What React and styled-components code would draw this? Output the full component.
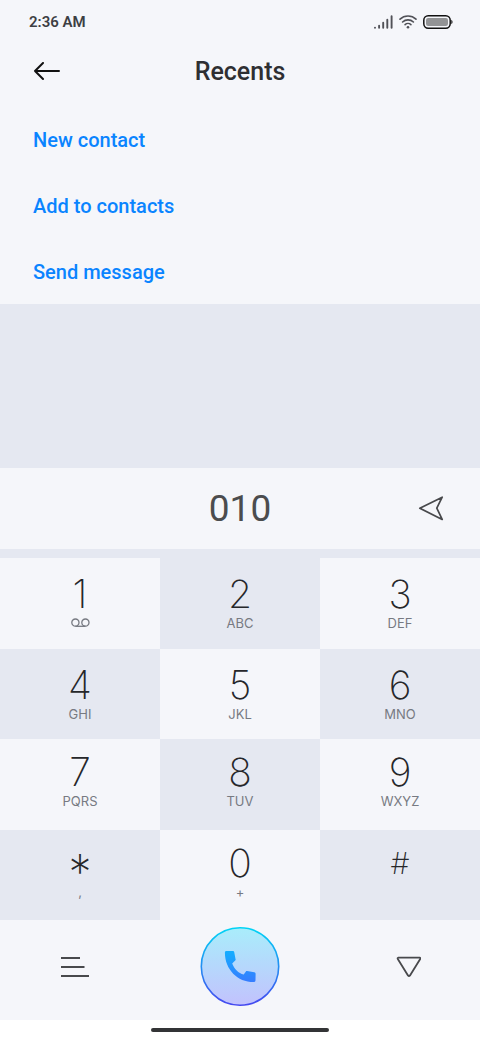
import React from "react";
import styled, { createGlobalStyle } from "styled-components";

const GlobalStyle = createGlobalStyle`
  *, *::before, *::after { box-sizing: border-box; }
  body {
    margin: 0;
    background: #fff;
    font-family: Roboto, "Liberation Sans", sans-serif;
    color: #303236;
  }
  button { font: inherit; color: inherit; border: 0; padding: 0; background: none; cursor: pointer; }
  svg { display: block; }
`;

const Screen = styled.div`
  min-height: 100vh;
  display: flex;
  flex-direction: column;
  background: #e5e8f1;
`;

const TopPanel = styled.div`
  background: #f5f6fa;
`;

const StatusBar = styled.div`
  height: 44px;
  padding: 0 27px 0 29px;
  display: flex;
  align-items: center;
  justify-content: space-between;
`;

const Clock = styled.span`
  font-size: 15px;
  font-weight: 600;
  line-height: 20px;
  color: #3d3e43;
`;

const StatusIcons = styled.div`
  display: flex;
  align-items: center;
  gap: 6px;
`;

const Header = styled.header`
  height: 56px;
  padding: 0 32px;
  display: grid;
  grid-template-columns: 1fr auto 1fr;
  align-items: center;
`;

const BackButton = styled.button`
  justify-self: start;
`;

const Title = styled.h1`
  margin: 0;
  font-size: 25px;
  font-weight: 500;
  line-height: 32px;
  color: #2e2f32;
`;

const Actions = styled.nav`
  padding: 28px 33px 20px;
  display: flex;
  flex-direction: column;
  align-items: flex-start;
  gap: 42px;
`;

const ActionLink = styled.a`
  font-size: 20px;
  font-weight: 500;
  line-height: 24px;
  color: #0a84ff;
  text-decoration: none;
`;

const Spacer = styled.div`
  flex: 1;
  min-height: 40px;
`;

const NumberBar = styled.div`
  height: 81px;
  margin-bottom: 9px;
  padding: 0 36px;
  display: grid;
  grid-template-columns: 1fr auto 1fr;
  align-items: center;
  background: #f5f6fa;
`;

const Dialed = styled.output`
  grid-column: 2;
  font-size: 37px;
  line-height: 44px;
  color: #4b4c4e;
`;

const EraseButton = styled.button`
  justify-self: end;
`;

const Keypad = styled.div`
  height: 362px;
  display: grid;
  grid-template-columns: repeat(3, 1fr);
  grid-template-rows: repeat(4, 1fr);
`;

const Key = styled.button`
  padding-top: ${(p) => (p.$lower ? 12 : 15)}px;
  display: flex;
  flex-direction: column;
  align-items: center;
  justify-content: flex-start;
  background: ${(p) => (p.$shaded ? "#e5e8f1" : "#f5f6fa")};
`;

const Digit = styled.span`
  height: 42px;
  font-family: Inter, Roboto, sans-serif;
  font-size: 39px;
  font-weight: 200;
  line-height: 42px;
  color: #26272a;
`;

const Hash = styled(Digit)`
  font-size: 30px;
`;

const Star = styled(Digit)`
  font-size: 46px;
  line-height: 58px;
`;

const Letters = styled.span`
  height: 16px;
  display: flex;
  align-items: center;
  font-family: Inter, Roboto, sans-serif;
  font-size: 13px;
  line-height: 16px;
  color: #777a82;
`;

const BottomBar = styled.div`
  height: 100px;
  display: grid;
  grid-template-columns: 1fr auto 1fr;
  align-items: center;
  padding: 0 59px 6px;
  background: #f5f6fa;
`;

const ToolButton = styled.button`
  justify-self: ${(p) => p.$side};
`;

const HomeArea = styled.div`
  height: 20px;
  display: flex;
  align-items: center;
  justify-content: center;
  background: #fff;
`;

const HomeIndicator = styled.div`
  width: 37%;
  height: 4px;
  border-radius: 2px;
  background: #333436;
`;

const keys = [
  { digit: "1", voicemail: true },
  { digit: "2", letters: "ABC" },
  { digit: "3", letters: "DEF" },
  { digit: "4", letters: "GHI" },
  { digit: "5", letters: "JKL" },
  { digit: "6", letters: "MNO" },
  { digit: "7", letters: "PQRS" },
  { digit: "8", letters: "TUV" },
  { digit: "9", letters: "WXYZ" },
  { digit: "*", letters: ",", Glyph: Star },
  { digit: "0", letters: "+" },
  { digit: "#", letters: "", Glyph: Hash },
];

const SignalIcon = () => (
  <svg width="19" height="14" viewBox="0 0 19 14" fill="none" stroke="#505157" strokeWidth="1.9" strokeLinecap="round">
    <path d="M1 12.6v.1M5.1 10.8v2M9.2 7.8v5M13.3 4.8v8M17.6 1.2v11.6" />
  </svg>
);

const WifiIcon = () => (
  <svg width="18" height="14" viewBox="0 0 18 14" fill="none" stroke="#505157" strokeWidth="1.6" strokeLinecap="round">
    <path d="M1 4.2C5.4 0 12.600 0 17 4.200M3.600 7c3-2.900 7.800-2.900 10.800 0M6.100 9.600c1.600-1.500 4.200-1.500 5.800 0" />
    <circle cx="9" cy="12.200" r="1.300" fill="#505157" stroke="none" />
  </svg>
);

const BatteryIcon = () => (
  <svg width="30" height="14" viewBox="0 0 30 14">
    <rect x=".8" y=".8" width="26.400" height="12.400" rx="4.400" fill="none" stroke="#111" strokeWidth="1.500" />
    <rect x="3" y="3" width="22" height="8" rx="2.200" fill="#929395" />
    <path d="M28.300 4.800c1.700.7 1.700 3.700 0 4.400z" fill="#111" />
  </svg>
);

const BackIcon = () => (
  <svg width="30" height="20" viewBox="0 0 30 20" fill="none" stroke="#111" strokeWidth="2" strokeLinecap="round" strokeLinejoin="round">
    <path d="M27 9H3M11 1L3 9l8 8" />
  </svg>
);

const EraseIcon = () => (
  <svg width="26" height="26" viewBox="0 0 26 26" fill="none" stroke="#47484b" strokeWidth="1.700" strokeLinejoin="round">
    <path d="M1.800 12.200L24.200 1.200 18.800 12.200 24.200 23.400Z" />
  </svg>
);

const VoicemailIcon = () => (
  <svg width="20" height="10" viewBox="0 0 20 10" fill="none" stroke="#777a82" strokeWidth="1.300">
    <circle cx="5.400" cy="4.600" r="3.600" />
    <circle cx="15.400" cy="4.600" r="3.600" />
    <path d="M5.400 8.300h10" />
  </svg>
);

const MenuIcon = () => (
  <svg width="30" height="22" viewBox="0 0 30 22" fill="none" stroke="#48494c" strokeWidth="1.800">
    <path d="M2 2h19M2 11h23.500M2 20h28" />
  </svg>
);

const CollapseIcon = () => (
  <svg width="26" height="22" viewBox="0 0 26 22" fill="none" stroke="#48494c" strokeWidth="1.800" strokeLinejoin="round">
    <path d="M3.400 1.600h21.200q1.200.300.600 1.400L15 19.400q-1 1.300-2 0L2.800 3q-.600-1.100.600-1.400z" />
  </svg>
);

const CallIcon = () => (
  <svg width="80" height="80" viewBox="0 0 80 80">
    <defs>
      <linearGradient id="callFill" x1="0" y1="0" x2="0" y2="1">
        <stop offset="0" stopColor="#a9edfb" />
        <stop offset="1" stopColor="#c2c2fd" />
      </linearGradient>
      <linearGradient id="callRing" x1="0" y1="0" x2="0" y2="1">
        <stop offset="0" stopColor="#00d4f5" />
        <stop offset="1" stopColor="#4548f0" />
      </linearGradient>
      <linearGradient id="callPhone" x1="0" y1="0" x2="0" y2="1">
        <stop offset="0" stopColor="#14aeff" />
        <stop offset="1" stopColor="#367cff" />
      </linearGradient>
    </defs>
    <circle cx="40" cy="39.500" r="38.700" fill="url(#callFill)" stroke="url(#callRing)" strokeWidth="1.600" />
    <path
      d="M26.400 24.100h6.200c1 0 1.500.5 1.700 1.400l1.400 7.600-3.500 3.300c1.800 5 6.400 9.900 11.500 11.200l2.200-3.200c.3-.4.700-.5 1.200-.4l7.200 1.300c.9.200 1.300.7 1.300 1.600l-.1 6.400c0 1.200-.7 1.800-1.900 1.800C37.500 55.100 24.900 42.300 24.900 25.700c0-1 .5-1.600 1.500-1.600z"
      fill="url(#callPhone)"
    />
  </svg>
);

export default function App() {
  return (
    <>
      <GlobalStyle />
      <Screen>
        <TopPanel>
          <StatusBar>
            <Clock>2:36 AM</Clock>
            <StatusIcons>
              <SignalIcon />
              <WifiIcon />
              <BatteryIcon />
            </StatusIcons>
          </StatusBar>
          <Header>
            <BackButton type="button" aria-label="Back">
              <BackIcon />
            </BackButton>
            <Title>Recents</Title>
          </Header>
          <Actions>
            <ActionLink href="#new">New contact</ActionLink>
            <ActionLink href="#add">Add to contacts</ActionLink>
            <ActionLink href="#message">Send message</ActionLink>
          </Actions>
        </TopPanel>
        <Spacer />
        <NumberBar>
          <Dialed>010</Dialed>
          <EraseButton type="button" aria-label="Erase">
            <EraseIcon />
          </EraseButton>
        </NumberBar>
        <Keypad>
          {keys.map(({ digit, letters, voicemail, Glyph = Digit }, i) => (
            <Key key={digit} type="button" $shaded={i % 2 === 1} $lower={i >= 6}>
              <Glyph>{digit}</Glyph>
              <Letters>{voicemail ? <VoicemailIcon /> : letters}</Letters>
            </Key>
          ))}
        </Keypad>
        <BottomBar>
          <ToolButton type="button" aria-label="Menu" $side="start">
            <MenuIcon />
          </ToolButton>
          <ToolButton type="button" aria-label="Call" $side="center">
            <CallIcon />
          </ToolButton>
          <ToolButton type="button" aria-label="Hide keypad" $side="end">
            <CollapseIcon />
          </ToolButton>
        </BottomBar>
        <HomeArea>
          <HomeIndicator />
        </HomeArea>
      </Screen>
    </>
  );
}
